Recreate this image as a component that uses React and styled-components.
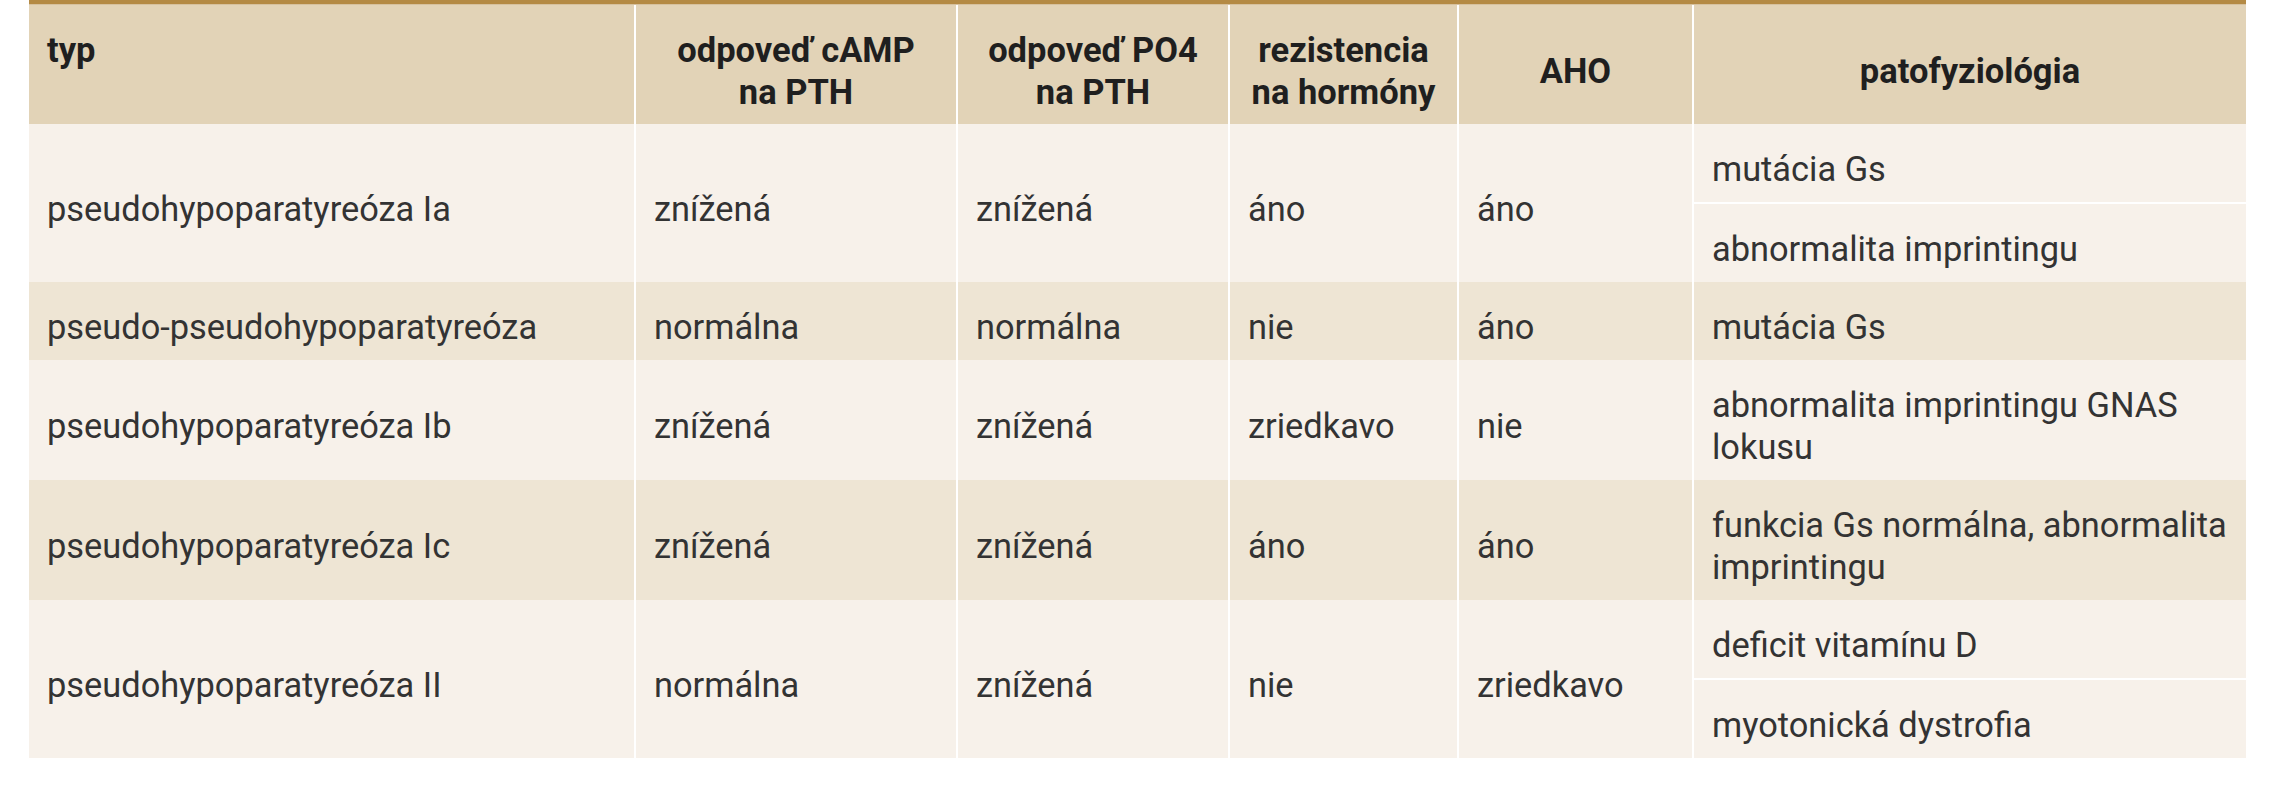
import React from 'react';
import styled, { createGlobalStyle } from 'styled-components';

const GlobalStyle = createGlobalStyle`
  html, body {
    margin: 0;
    padding: 0;
    background: #ffffff;
  }
  body {
    font-family: Roboto, "Liberation Sans", Arial, sans-serif;
    color: #222222;
  }
`;

const COLS = '605px 320px 270px 227px 233px 552px';

const colors = {
  gold: '#b48a44',
  head: '#e2d3b7',
  light: '#f7f1ea',
  dark: '#eee5d4',
};

const Wrap = styled.div`
  padding: 0 0 0 29px;
`;

const Table = styled.div`
  width: 2217px;
  border-top: 4px solid ${colors.gold};
`;

const HeadRow = styled.div`
  display: grid;
  grid-template-columns: ${COLS};
  column-gap: 2px;
  background: #ffffff;
  border-top: 1px solid #d6c19f;
`;

const HeadCell = styled.div`
  display: flex;
  align-items: ${({ top }) => (top ? 'flex-start' : 'center')};
  justify-content: ${({ left }) => (left ? 'flex-start' : 'center')};
  text-align: ${({ left }) => (left ? 'left' : 'center')};
  padding: 24px ${({ left }) => (left ? '18px' : '8px')} 11px;
  background: ${colors.head};
  font-size: 34.5px;
  line-height: 42px;
  font-weight: 700;
  color: #1f1f1f;
  white-space: nowrap;
`;

const Group = styled.div`
  display: grid;
  grid-template-columns: ${COLS};
  column-gap: 2px;
  background: #ffffff;
`;

const Cell = styled.div`
  display: flex;
  align-items: center;
  padding: 24px 6px 12px 18px;
  background: ${({ tone }) => colors[tone]};
  font-size: 34.4px;
  line-height: 42px;
  color: #333333;
`;

const Stack = styled.div`
  display: flex;
  flex-direction: column;
  gap: 2px;
  background: #ffffff;
`;

const rows = [
  {
    tone: 'light',
    typ: 'pseudohypoparatyreóza Ia',
    camp: 'znížená',
    po4: 'znížená',
    rez: 'áno',
    aho: 'áno',
    pato: ['mutácia Gs', 'abnormalita imprintingu'],
  },
  {
    tone: 'dark',
    typ: 'pseudo-pseudohypoparatyreóza',
    camp: 'normálna',
    po4: 'normálna',
    rez: 'nie',
    aho: 'áno',
    pato: ['mutácia Gs'],
  },
  {
    tone: 'light',
    typ: 'pseudohypoparatyreóza Ib',
    camp: 'znížená',
    po4: 'znížená',
    rez: 'zriedkavo',
    aho: 'nie',
    pato: ['abnormalita imprintingu GNAS lokusu'],
  },
  {
    tone: 'dark',
    typ: 'pseudohypoparatyreóza Ic',
    camp: 'znížená',
    po4: 'znížená',
    rez: 'áno',
    aho: 'áno',
    pato: ['funkcia Gs normálna, abnormalita imprintingu'],
  },
  {
    tone: 'light',
    typ: 'pseudohypoparatyreóza II',
    camp: 'normálna',
    po4: 'znížená',
    rez: 'nie',
    aho: 'zriedkavo',
    pato: ['deficit vitamínu D', 'myotonická dystrofia'],
  },
];

function App() {
  return (
    <Wrap>
      <GlobalStyle />
      <Table>
        {/* hlavička */}
        <HeadRow>
          <HeadCell left top>typ</HeadCell>
          <HeadCell>
            odpoveď cAMP
            <br />
            na PTH
          </HeadCell>
          <HeadCell>
            odpoveď PO4
            <br />
            na PTH
          </HeadCell>
          <HeadCell>
            rezistencia
            <br />
            na hormóny
          </HeadCell>
          <HeadCell>AHO</HeadCell>
          <HeadCell>patofyziológia</HeadCell>
        </HeadRow>

        {rows.map((row, idx) => (
          <Group key={idx}>
            <Cell tone={row.tone}>{row.typ}</Cell>
            <Cell tone={row.tone}>{row.camp}</Cell>
            <Cell tone={row.tone}>{row.po4}</Cell>
            <Cell tone={row.tone}>{row.rez}</Cell>
            <Cell tone={row.tone}>{row.aho}</Cell>
            {row.pato.length > 1 ? (
              <Stack>
                {row.pato.map((p) => (
                  <Cell key={p} tone={row.tone}>
                    {p}
                  </Cell>
                ))}
              </Stack>
            ) : (
              <Cell tone={row.tone}>{row.pato[0]}</Cell>
            )}
          </Group>
        ))}
      </Table>
    </Wrap>
  );
}

export default App;
